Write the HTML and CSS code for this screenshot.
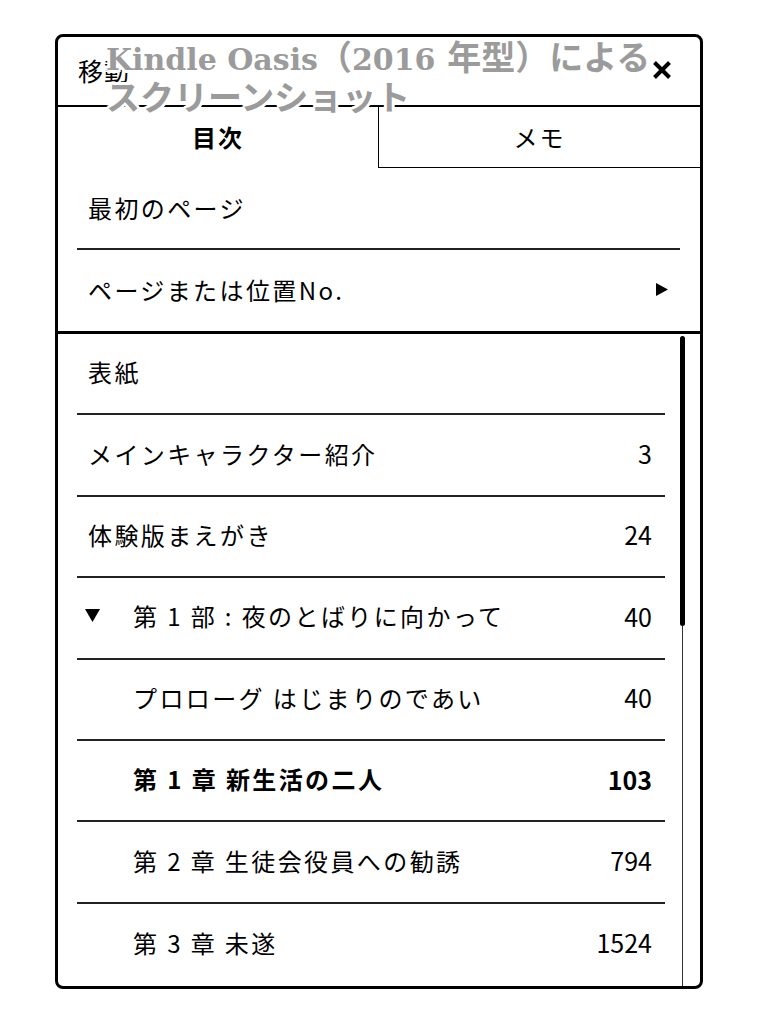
FILE: index.html
```html
<!DOCTYPE html>
<html lang="ja">
<head>
<meta charset="utf-8">
<link rel="stylesheet" href="styles.css">
</head>
<body>
<div class="panel">
  <header class="head">
    <span class="head-title">移動</span>
    <svg class="close" width="20" height="20" viewBox="0 0 20 20"><path d="M2.5 2.5 L17.5 17.5 M17.5 2.5 L2.5 17.5" stroke="#000" stroke-width="4" stroke-linecap="butt"/></svg>
  </header>
  <nav class="tabs">
    <div class="tab tab-active">目次</div>
    <div class="tab tab-other">メモ</div>
  </nav>
  <section class="menu">
    <div class="menu-row"><span class="jp">最初のページ</span></div>
    <div class="menu-row menu-last"><span class="jp">ページまたは位置No.</span>
      <svg class="arrow" width="12" height="13" viewBox="0 0 12 13"><polygon points="0,0 12,6.5 0,13" fill="#000"/></svg>
    </div>
  </section>
  <section class="toc">
    <div class="toc-items">
      <div class="row"><span class="jp">表紙</span></div>
      <div class="row"><span class="jp">メインキャラクター紹介</span><span class="num">3</span></div>
      <div class="row"><span class="jp">体験版まえがき</span><span class="num">24</span></div>
      <div class="row row-part"><svg class="tri" width="15" height="13" viewBox="0 0 15 13"><polygon points="0,0 15,0 7.5,13" fill="#000"/></svg><span class="jp">第 1 部 : 夜のとばりに向かって</span><span class="num">40</span></div>
      <div class="row row-sub"><span class="jp">プロローグ はじまりのであい</span><span class="num">40</span></div>
      <div class="row row-sub row-bold"><span class="jp">第 1 章 新生活の二人</span><span class="num">103</span></div>
      <div class="row row-sub"><span class="jp">第 2 章 生徒会役員への勧誘</span><span class="num">794</span></div>
      <div class="row row-sub row-end"><span class="jp">第 3 章 未遂</span><span class="num">1524</span></div>
    </div>
    <div class="scroll">
      <div class="thumb"></div>
      <div class="track"></div>
    </div>
  </section>
</div>
<div class="watermark"><span class="wm-lat">Kindle Oasis</span>（<span class="wm-lat">2016</span> 年型）による<br>スクリーンショット</div>
</body>
</html>
```

FILE: styles.css
```css
html, body {
  margin: 0;
  padding: 0;
  background: #fff;
}
body {
  width: 758px;
  height: 1024px;
  position: relative;
  font-family: "Noto Sans CJK JP", "Noto Sans", sans-serif;
  color: #000;
}
.panel {
  margin: 34px 0 0 55px;
  width: 648px;
  height: 955px;
  box-sizing: border-box;
  border: 3px solid #000;
  border-radius: 8px;
  overflow: hidden;
  display: flex;
  flex-direction: column;
}
.head {
  height: 70px;
  box-sizing: border-box;
  border-bottom: 2px solid #000;
  display: flex;
  align-items: center;
  justify-content: space-between;
  padding: 0 28px 2px 20px;
}
.head-title {
  font-size: 25px;
  letter-spacing: 1px;
}
.close {
  display: block;
}
.tabs {
  display: grid;
  grid-template-columns: 320px 1fr;
  height: 61px;
}
.tab {
  display: flex;
  align-items: center;
  justify-content: center;
  font-size: 24px;
  letter-spacing: 2px;
  padding-bottom: 2px;
}
.tab-active {
  font-weight: 700;
}
.tab-other {
  border-left: 1px solid #000;
  border-bottom: 1.5px solid #000;
}
.menu {
  border-bottom: 3px solid #000;
}
.menu-row {
  margin: 0 20px 0 19px;
  padding: 0 12px 2px 11px;
  height: 82px;
  box-sizing: border-box;
  display: flex;
  align-items: center;
  justify-content: space-between;
  border-bottom: 2px solid #222;
}
.menu-row.menu-last {
  border-bottom: none;
  height: 81px;
}
.jp {
  font-size: 24px;
  letter-spacing: 2.4px;
}
.num {
  font-size: 25px;
}
.toc {
  flex: 1;
  display: flex;
  min-height: 0;
}
.toc-items {
  margin-left: 19px;
  width: 588px;
  display: flex;
  flex-direction: column;
}
.row {
  height: 81.4px;
  flex: none;
  box-sizing: border-box;
  border-bottom: 2px solid #222;
  display: flex;
  align-items: center;
  justify-content: space-between;
  padding: 0 13px 4px 11px;
}
.row-end {
  border-bottom: none;
}
.row-sub {
  padding-left: 56px;
}
.row-part {
  padding-left: 8px;
}
.tri {
  display: block;
  margin-right: 33px;
}
.row-part .jp {
  margin-right: auto;
}
.row-bold .jp,
.row-bold .num {
  font-weight: 700;
}
.scroll {
  width: 35px;
  display: flex;
  flex-direction: column;
  align-items: center;
  padding-top: 2px;
}
.thumb {
  width: 5px;
  height: 290px;
  border-radius: 3px;
  background: #000;
}
.track {
  flex: 1;
  width: 1px;
  background: #333;
}
.watermark {
  position: absolute;
  left: 106px;
  top: 39px;
  font-family: "DejaVu Serif", "Noto Sans CJK JP", serif;
  font-weight: 700;
  font-size: 34px;
  line-height: 39px;
  color: #9b9b9b;
  white-space: nowrap;
  text-shadow: 3px 0 0 #fff, -3px 0 0 #fff, 0 3px 0 #fff, 0 -3px 0 #fff,
    2px 2px 0 #fff, -2px -2px 0 #fff, 2px -2px 0 #fff, -2px 2px 0 #fff;
}
.wm-lat {
  font-size: 30px;
}
```
